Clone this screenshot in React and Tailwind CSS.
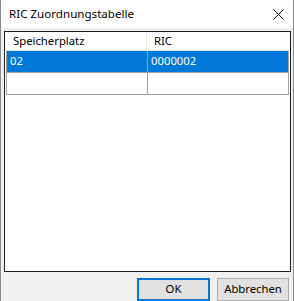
export default function App() {
  const rows = [
    { slot: "02", ric: "0000002", selected: true },
    { slot: "", ric: "", selected: false },
  ];

  return (
    <div
      className="w-[294px] h-[301px] flex flex-col bg-[#f0f0f0] border-x border-[#8a8a8a] overflow-hidden text-[11.3px] text-black"
      style={{ fontFamily: '"Noto Sans", "Open Sans", sans-serif' }}
    >
      {/* title bar */}
      <div className="h-[28px] bg-white flex items-center justify-between pl-[8px] pr-[9px] shrink-0">
        <span className="leading-none text-[11.6px]">RIC Zuordnungstabelle</span>
        <svg width="11" height="11" viewBox="0 0 11 11" className="mt-[1px]">
          <path d="M0.5 0.5 L10.5 10.5 M10.5 0.5 L0.5 10.5" stroke="#000" strokeWidth="1" />
        </svg>
      </div>

      {/* list */}
      <div className="pt-[3px] pl-[3px] pr-[2px]">
        <div className="h-[241px] border border-[#1e1e1e] bg-white">
          <div className="h-[19px] flex border-b border-[#e5e5e5]">
            <div className="w-[142px] pl-[8px] flex items-center border-r border-[#e5e5e5]">Speicherplatz</div>
            <div className="flex-1 pl-[7px] flex items-center">RIC</div>
          </div>
          {rows.map((row, i) => (
            <div
              key={i}
              className={
                "ml-[1px] mr-[1px] h-[22px] flex border-b border-l border-r border-[#a0a0a0] " +
                (row.selected ? "bg-[#0078d7] text-white" : "bg-white")
              }
            >
              <div className="w-[141px] pl-[3px] flex items-center border-r border-[#a0a0a0]">{row.slot}</div>
              <div className="flex-1 pl-[3px] flex items-center">{row.ric}</div>
            </div>
          ))}
        </div>
      </div>

      {/* buttons */}
      <div className="flex justify-end gap-[7px] pt-[6px] pr-[4px]">
        <button className="w-[73px] h-[23px] bg-[#e1e1e1] border-2 border-[#0078d7] flex items-center justify-center">
          OK
        </button>
        <button className="w-[72px] h-[23px] bg-[#e1e1e1] border border-[#adadad] flex items-center justify-center">
          Abbrechen
        </button>
      </div>
    </div>
  );
}
